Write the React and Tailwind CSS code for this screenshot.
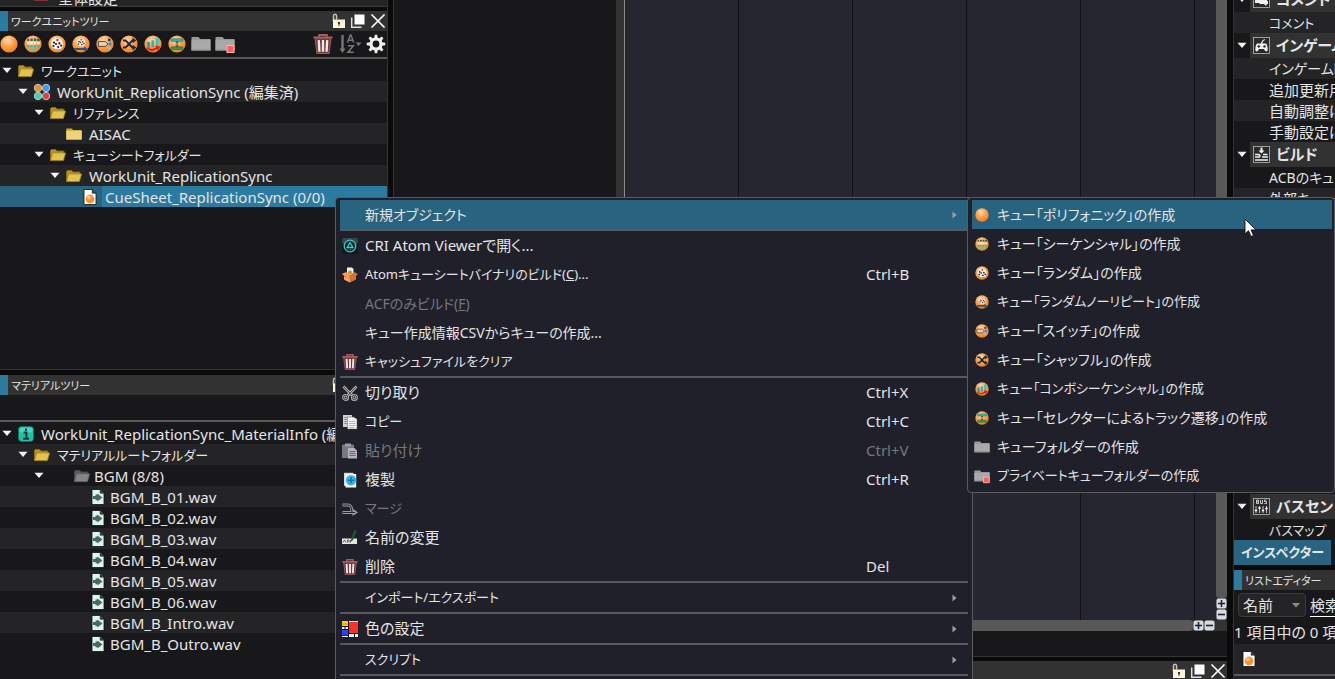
import React, { useId } from 'react';
import clsx from 'clsx';

/* ---------- icons ---------- */

const Orb = ({ size = 18, children }) => {
  const id = useId();
  return (
    <svg width={size} height={size} viewBox="0 0 18 18" className="shrink-0">
      <defs>
        <radialGradient id={id} cx="0.42" cy="0.3" r="0.75">
          <stop offset="0" stopColor="#ffdcb4" />
          <stop offset="0.45" stopColor="#ffa552" />
          <stop offset="1" stopColor="#f27a10" />
        </radialGradient>
      </defs>
      <circle cx="9" cy="9" r="8.6" fill={`url(#${id})`} />
      {children}
    </svg>
  );
};

const Polyphonic = ({ size }) => <Orb size={size} />;

const Sequential = ({ size }) => (
  <Orb size={size}>
    {[3, 6.4, 9.8, 13.2].map((x, i) => (
      <g key={x}>
        <rect x={x} y="3.6" width="2.4" height="2.4" fill={i === 0 ? '#8b5a2b' : '#2e5d5a'} />
        <rect x={x} y="7" width="2.4" height="2.4" fill="#f3f0d8" />
        <rect x={x} y="10.2" width="2.4" height="2.2" fill="#37b9a8" />
        {i > 0 && i < 3 && <rect x={x} y="13.2" width="2.4" height="2.2" fill="#37d6c8" />}
      </g>
    ))}
  </Orb>
);

const Dice = () => (
  <>
    <path d="M5 4.2 9.5 2.8l4.3 2L15.3 10l-2 3.8-5.6.6-4-2.4-.6-4z" fill="#f6f3f0" />
    <circle cx="9.4" cy="5" r="1.2" fill="#d33" />
    <g fill="#222">
      <circle cx="6" cy="7.6" r="1.1" />
      <circle cx="8" cy="9" r="1.1" />
      <circle cx="5.4" cy="11" r="1.1" />
      <circle cx="11.4" cy="8.4" r="1.1" />
      <circle cx="13.2" cy="10.6" r="1.1" />
      <circle cx="10.2" cy="12" r="1.1" />
    </g>
  </>
);

const RandomCue = ({ size }) => (
  <Orb size={size}>
    <Dice />
  </Orb>
);

const RandomNoRepeat = ({ size }) => (
  <Orb size={size}>
    <g transform="translate(2.7 1.2) scale(.7)">
      <Dice />
    </g>
    <path d="M2 13h10v-1.6l4 2.6-4 2.4V15H3.4z" fill="#28557f" />
  </Orb>
);

const SwitchCue = ({ size }) => (
  <Orb size={size}>
    <path d="M2.4 6.6h7l2.6 2.4-2.6 2.4h-7z" fill="#e9d2b0" stroke="#5f4a35" />
    <rect x="12" y="3.6" width="2.6" height="2.6" fill="#33414f" />
    <rect x="12.6" y="7.6" width="2.8" height="2.8" fill="#2a8df0" />
    <rect x="12" y="11.8" width="2.6" height="2.6" fill="#8ec1ea" />
  </Orb>
);

const Shuffle = ({ size }) => (
  <Orb size={size}>
    <path d="M3 5.400h2.600l6.800 7.200h1.600M3 12.600h2.600l6.800-7.200h1.600" fill="none" stroke="#15294a" strokeWidth="2" />
    <path d="M12.600 2.600 16.200 5.400l-3.600 2.800zM12.600 9.800l3.600 2.800-3.600 2.800z" fill="#15294a" />
  </Orb>
);

const ComboSequential = ({ size }) => (
  <Orb size={size}>
    <rect x="3.2" y="7" width="2.6" height="6" fill="#1d9aa6" />
    <rect x="7.4" y="5.4" width="2.6" height="7" fill="#22b4bd" />
    <rect x="11.8" y="3" width="2.8" height="8" fill="#2fc6c9" />
    <path d="M2.6 12.8 8 14l4-1.6-.6-1.8 5 1.2-2.8 4-.6-1.6L8 16.2l-4.8-1.6z" fill="#e01e10" />
  </Orb>
);

const TrackTransition = ({ size }) => (
  <Orb size={size}>
    <rect x="3" y="3.8" width="12" height="2.6" rx="1" fill="#2cbcb2" stroke="#17746e" strokeWidth=".6" />
    <rect x="3" y="11.8" width="12" height="2.8" rx="1" fill="#2f9a48" stroke="#176b2c" strokeWidth=".6" />
    <path d="M9 6.6v5M7.6 7.8 9 6.6l1.400 1.200M7.600 10.600 9 11.800l1.400-1.200" fill="none" stroke="#1e3f66" strokeWidth=".9" />
  </Orb>
);

const GreyFolder = ({ size = 20, badge }) => (
  <svg width={size} height={size} viewBox="0 0 20 20" className="shrink-0">
    <path d="M.5 3h7l1.6 2h10.4v11.5H.5z" fill="#9b9b9b" />
    <path d="M.5 6.2h19V16.5H.5z" fill="#a9a9a9" />
    <path d="M.5 16.1h19" stroke="#7c7c7c" strokeWidth=".8" />
    {badge && <rect x="12" y="11.5" width="7" height="7" fill="#ff5c5c" stroke="#ffb3ac" />}
  </svg>
);
const PrivateFolder = ({ size }) => <GreyFolder size={size} badge />;

const OpenFolder = ({ dim }) => (
  <svg width="16" height="16" viewBox="0 0 16 16">
    <path d="M.5 13.5v-10l.8-1h4.4l1.2 1.6h7v2" fill={dim ? '#5c5c5c' : '#b3922a'} stroke={dim ? '#4a4a4a' : '#8a6d12'} />
    <path d="M2.8 6h12.8l-2.2 7.6H.6z" fill={dim ? '#858585' : '#e2c34c'} stroke={dim ? '#6b6b6b' : '#a8861f'} strokeWidth=".7" />
  </svg>
);

const ClosedFolder = () => (
  <svg width="16" height="16" viewBox="0 0 16 16">
    <path d="M.3 2.4h5.4l1.4 1.5h8.6v9.8H.3z" fill="#c9a63c" />
    <path d="M.3 4.8h15.4v8.6H.3z" fill="#eed476" />
  </svg>
);

const WorkUnitIcon = () => (
  <svg width="18" height="18" viewBox="0 0 18 18" className="shrink-0">
    <g stroke="#b9c6d8" strokeWidth="1">
      <circle cx="5" cy="5" r="3.7" fill="#f58a1f" />
      <circle cx="13" cy="5" r="3.7" fill="#3d9fe8" />
      <circle cx="5" cy="13" r="3.7" fill="#3fd6a0" />
      <circle cx="13" cy="13" r="3.7" fill="#e63a48" />
    </g>
  </svg>
);

const PageBase = ({ fill = '#fff', children }) => (
  <svg width="14" height="16" viewBox="0 0 14 16">
    <path d="M1 .5h8.4L13 4v11.5H1z" fill={fill} stroke="#101010" strokeWidth=".8" />
    <path d="M9.2.6V4.2h3.6" fill="#2b4a44" stroke="#101010" strokeWidth=".6" />
    {children}
  </svg>
);

const CueSheetIcon = () => (
  <PageBase>
    <circle cx="7" cy="10" r="4.4" fill="#ff8e2b" />
    <circle cx="6" cy="8.6" r="2" fill="#ffc48a" />
  </PageBase>
);

const WaveIcon = () => (
  <PageBase fill="#d9f7ee">
    <path d="M2 7h2.500V5.600h2V4.400l4.900 4.100-4.900 4.100v-1.400h-2V10H2z" fill="#4c6660" />
  </PageBase>
);

const InfoIcon = () => (
  <svg width="16" height="16" viewBox="0 0 16 16">
    <rect x=".5" y=".5" width="15" height="15" rx="3" fill="#26bfa6" stroke="#126c5f" />
    <rect x="1.5" y="1.5" width="13" height="5" rx="2" fill="#45d8c0" />
    <path d="M8 2.6v2.2M5.6 6.6H8.4v6M5.2 12.8h5.8" fill="none" stroke="#17343a" strokeWidth="2" />
  </svg>
);

const Trash = ({ size = 16 }) => (
  <svg width={size} height={size} viewBox="0 0 18 18" className="shrink-0">
    <path d="M1.800 3.500h14.400L14.400 17.400H3.600z" fill="#6e3a3b" stroke="#9c5a5a" />
    <path d="M5.200 5.500l.6 10.500M9 5.500v10.500M12.800 5.500l-.6 10.500" stroke="#efe9e9" strokeWidth="2.100" />
    <path d="M.3 3h17.400M5.500 2.600V.900h7v1.700" fill="none" stroke="#a85c5c" strokeWidth="1.600" />
  </svg>
);

const SortIcon = () => (
  <svg width="23" height="20" viewBox="0 0 23 20" fill="none" stroke="#777" strokeWidth="1.5">
    <path d="M3.5 1v16" strokeWidth="2.4" />
    <path d="M.5 14.5h6L3.5 19z" fill="#777" stroke="none" />
    <path d="M8.5 8.5 11.3 1h.6l2.8 7.5M9.4 6.2h4.5M9 11.8h5.4L9 18.2h5.8" />
    <path d="M16.5 8.5h6l-3 3.4z" fill="#777" stroke="none" />
  </svg>
);

const Gear = () => (
  <svg width="20" height="20" viewBox="-10 -10 20 20">
    <circle r="5" fill="none" stroke="#efefef" strokeWidth="3.2" />
    {[0, 45, 90, 135, 180, 225, 270, 315].map((a) => (
      <path key={a} d="M-1.8-5.6-1.2-9.3h2.4l.6 3.7z" fill="#efefef" transform={`rotate(${a})`} />
    ))}
  </svg>
);

const LockIcon = () => (
  <svg width="14" height="16" viewBox="0 0 14 16">
    <path d="M1.5 8V3Q1.500 1.200 3 1.200 4.600 1.200 4.600 3v3.500" fill="none" stroke="#c9c4ae" strokeWidth="1.5" />
    <rect x="1" y="6.500" width="12" height="8.500" fill="#fdf6dc" />
    <path d="M6 9h2v2h-.500v2h-1v-2H6z" fill="#333" />
  </svg>
);

const FloatIcon = () => (
  <svg width="16" height="16" viewBox="0 0 16 16">
    <path d="M1.700 4.500v9.800h9.800" fill="none" stroke="#ddd" strokeWidth="1.500" />
    <rect x="4.500" y="1.500" width="10" height="10" fill="#fff" />
  </svg>
);

const CloseIcon = () => (
  <svg width="16" height="16" viewBox="0 0 16 16">
    <path d="m1.500 1.500 13 13m0-13-13 13" stroke="#fff" strokeWidth="1.700" />
  </svg>
);

const AtomViewer = () => (
  <svg width="16" height="16" viewBox="0 0 16 16">
    <rect width="16" height="16" rx="2" fill="#0c1a20" />
    <rect width="16" height="6" rx="2" fill="#34474f" />
    <circle cx="8" cy="8" r="5.800" fill="#0b2a30" stroke="#41c6c0" strokeWidth="1.300" />
    <path d="m8 4.600 2.800 4.800H5.200z" fill="none" stroke="#3ad0c8" strokeWidth="1.200" />
    <path d="M5 11h6" stroke="#1c7f80" />
  </svg>
);

const BuildBox = () => (
  <svg width="16" height="16" viewBox="0 0 16 16">
    <path d="M5 .500h5l1.500 1.500v6H5z" fill="#f3ede4" />
    <circle cx="8" cy="5.500" r="2" fill="#c98a3e" />
    <path d="M0 7 4 5l4 3.500L12 5l4 2-2 2v3.500L8 15.500l-6-3V9z" fill="#d9702c" />
    <path d="M2 9.500 8 11v4.500l-6-3zM0 7l4-1.500 4 4-1.500 1.500z" fill="#f3a15c" />
  </svg>
);

const Scissors = () => (
  <svg width="16" height="16" viewBox="0 0 16 16" fill="none">
    <g stroke="#b5b5b5" strokeWidth="2.600">
      <path d="m1.500 1.500 8.700 9M14.500 1.500l-8.700 9" />
      <circle cx="3.600" cy="12.400" r="2.200" />
      <circle cx="12.400" cy="12.400" r="2.200" />
    </g>
    <g stroke="#25252e" strokeWidth=".8">
      <path d="m2 2 8 8.300M14 2l-8 8.300" />
      <circle cx="3.600" cy="12.400" r="2.200" />
      <circle cx="12.400" cy="12.400" r="2.200" />
    </g>
  </svg>
);

const CopyIcon = () => (
  <svg width="16" height="16" viewBox="0 0 16 16">
    <path d="M1 1h9v12H1z" fill="#d2d2d2" />
    <path d="M2.500 3.500h2M2.500 5.500h2M2.500 7.500h2M2.500 9.500h2" stroke="#777" />
    <path d="M5.500 3h6l3.500 2v10H5.500z" fill="#f4f4f4" stroke="#55555c" strokeWidth=".5" />
    <path d="M7 7.500h6.500M7 9.500h6.500M7 11.500h6.500M7 13.500h5" stroke="#a6a6a6" strokeWidth=".8" />
  </svg>
);

const PasteIcon = () => (
  <svg width="16" height="16" viewBox="0 0 16 16">
    <rect x="0" y="1.500" width="12" height="13.500" rx="1" fill="#787880" />
    <rect x="3" y=".5" width="6" height="3" fill="#9a9aa0" />
    <path d="M6 5h6.500L15 7.500v8H6z" fill="#b4b4be" />
    <path d="M7.500 8.500h6M7.500 10.500h6M7.500 12.500h6" stroke="#666670" />
  </svg>
);

const DuplicateIcon = () => (
  <svg width="16" height="16" viewBox="0 0 16 16">
    <path d="M2 .8h9.500v13H2z" fill="#d9d9d9" />
    <path d="M3.500 2h10.700v13.500H3.500z" fill="#fff" />
    <circle cx="9" cy="8.300" r="5.200" fill="#2db4f5" />
    <path d="M9 5.300v6M6 8.300h6" stroke="#0b4f80" strokeWidth="1.100" />
  </svg>
);

const MergeIcon = () => (
  <svg width="16" height="16" viewBox="0 0 16 16" fill="none">
    <path d="M.5 4h5.500Q9.500 4 10 10M.5 11.500h11" stroke="#9a9aa2" strokeWidth="3" />
    <path d="m10.500 7.500 5.500 4-5.500 3.500z" fill="#9a9aa2" />
    <path d="M1 4h5Q9.500 4 10 11M1 11.500h12" stroke="#24242c" strokeWidth="1.100" />
  </svg>
);

const RenameIcon = () => (
  <svg width="16" height="16" viewBox="0 0 16 16">
    <rect x="0" y="8.500" width="15" height="5.500" fill="#e6e6d8" />
    <path d="M1 12.500 2.500 10 4 12.500M5.500 12.500V10H7v2.500M8.500 12.500V10" stroke="#555" strokeWidth=".9" fill="none" />
    <path d="M12 .5h2.800L11 10l-2.600 2z" fill="#14602b" />
  </svg>
);

const ColorIcon = () => (
  <svg width="16" height="16" viewBox="0 0 16 16">
    <rect width="16" height="16" fill="#111" />
    <path d="M0 0h6v5H0z" fill="#ffd500" />
    <path d="M0 3h6" stroke="#a88c00" strokeWidth=".8" />
    <path d="M7 1h9v11H7z" fill="#ff3126" />
    <path d="M0 6h2.500v2H0zM3.500 6H6v2H3.500zM0 15h6v1H0zM7 13h5v3H7zM13 13h3v3h-3zM7 0h9v1H7z" fill="#f4f4f4" />
    <path d="M0 9h6v5.500H0z" fill="#2b42ff" />
  </svg>
);

const BoxedIcon = ({ children }) => (
  <svg width="17" height="17" viewBox="0 0 17 17" className="shrink-0">
    <rect x=".5" y=".5" width="16" height="16" fill="#2a2a2a" stroke="#b9b9b9" strokeWidth=".8" />
    {children}
  </svg>
);

const CommentGlyph = () => (
  <BoxedIcon>
    <path d="M2 3h12v7h1v3h-1l-1 2-2-2H7l-1-1H2z" fill="#f0f0f0" />
  </BoxedIcon>
);
const GameGlyph = () => (
  <BoxedIcon>
    <path d="M4.500 6.500h8q1.800 0 2.200 5.500.2 2.500-1.500 2.500-1 0-2.200-2.500H6Q4.800 14.500 3.800 14.500 2 14.500 2.300 12 2.700 6.500 4.500 6.500zM8 6.500Q8 4 11.500 2l.5.700Q9.300 4.500 9.200 6.500z" fill="#f2f2f2" />
    <path d="M4.300 9.400h3M5.800 7.900v3" stroke="#222" />
    <circle cx="11.500" cy="9.400" r="1.200" fill="#222" />
  </BoxedIcon>
);
const BuildGlyph = () => (
  <BoxedIcon>
    <path d="M7.500 1.500h2v3h2l-3 3-3-3h2z" fill="#f2f2f2" />
    <path d="M2 8.500h4l1.500 2M10 8.500h4.500M2 11h5M9 11h6M2 14h13" stroke="#f2f2f2" strokeWidth="1.400" fill="none" />
  </BoxedIcon>
);
const BusGlyph = () => (
  <BoxedIcon>
    <path d="M3 8v7M6.500 8v7M10 8v7M13.500 8v7" stroke="#eee" fill="none" strokeWidth=".8" />
    <path d="M3.500 2v3.500h2V2zM3.500 3.700h2M7.500 2v3.500h2V2M13.500 2h-2v1.700h2v1.800h-2" stroke="#eee" fill="none" strokeWidth=".8" />
    <path d="M1.800 12.500h2.400M5.300 10h2.400M8.800 12.500h2.400M12.300 10.500h2.400" stroke="#fff" strokeWidth="1.600" />
  </BoxedIcon>
);

const Caret = () => (
  <svg width="10" height="7" viewBox="0 0 10 7">
    <path d="M.5.700h9L5 6z" fill="#f4f4f4" />
  </svg>
);

/* ---------- data ---------- */

const workTree = [
  { label: 'ワークユニット', depth: 0, icon: OpenFolder, open: true },
  { label: 'WorkUnit_ReplicationSync (編集済)', depth: 1, icon: WorkUnitIcon, open: true },
  { label: 'リファレンス', depth: 2, icon: OpenFolder, open: true },
  { label: 'AISAC', depth: 3, icon: ClosedFolder },
  { label: 'キューシートフォルダー', depth: 2, icon: OpenFolder, open: true },
  { label: 'WorkUnit_ReplicationSync', depth: 3, icon: OpenFolder, open: true },
  { label: 'CueSheet_ReplicationSync (0/0)', depth: 4, icon: CueSheetIcon, selected: true },
];

const DimFolder = () => <OpenFolder dim />;

const materialTree = [
  { label: 'WorkUnit_ReplicationSync_MaterialInfo (編集済)', depth: 0, icon: InfoIcon, open: true },
  { label: 'マテリアルルートフォルダー', depth: 1, icon: OpenFolder, open: true },
  { label: 'BGM (8/8)', depth: 2, icon: DimFolder, open: true, gutter: true },
  ...['01', '02', '03', '04', '05', '06', 'Intro', 'Outro'].map((n) => ({
    label: `BGM_B_${n}.wav`,
    depth: 3,
    icon: WaveIcon,
    gutter: true,
  })),
];

const cueTools = [
  ['ポリフォニック', Polyphonic],
  ['シーケンシャル', Sequential],
  ['ランダム', RandomCue],
  ['ランダムノーリピート', RandomNoRepeat],
  ['スイッチ', SwitchCue],
  ['シャッフル', Shuffle],
  ['コンボシーケンシャル', ComboSequential],
  ['セレクターによるトラック遷移', TrackTransition],
];

const menuGroups = [
  [{ label: '新規オブジェクト', sub: true, active: true }],
  [
    { label: 'CRI Atom Viewerで開く...', icon: AtomViewer },
    { label: 'Atomキューシートバイナリのビルド', mnemonic: 'C', tail: '...', icon: BuildBox, keys: 'Ctrl+B' },
    { label: 'ACFのみビルド', mnemonic: 'F', disabled: true },
    { label: 'キュー作成情報CSVからキューの作成...' },
    { label: 'キャッシュファイルをクリア', icon: Trash },
  ],
  [
    { label: '切り取り', icon: Scissors, keys: 'Ctrl+X' },
    { label: 'コピー', icon: CopyIcon, keys: 'Ctrl+C' },
    { label: '貼り付け', icon: PasteIcon, keys: 'Ctrl+V', disabled: true },
    { label: '複製', icon: DuplicateIcon, keys: 'Ctrl+R' },
    { label: 'マージ', icon: MergeIcon, disabled: true },
    { label: '名前の変更', icon: RenameIcon },
    { label: '削除', icon: Trash, keys: 'Del' },
  ],
  [{ label: 'インポート/エクスポート', sub: true }],
  [{ label: '色の設定', icon: ColorIcon, sub: true }],
  [{ label: 'スクリプト', sub: true }],
];

const labelSize = (label) => {
  const kana = (label.match(/[ァ-ヶー]/g) || []).length;
  if (kana === 0) return 'text-[15px]';
  return kana > 12 || kana / label.length > 0.9 ? 'text-[13px]' : 'text-[14px]';
};

/* ---------- pieces ---------- */

const WindowButtons = () => (
  <div className="flex items-center gap-1 pr-px">
    <button type="button" aria-label="ロック"><LockIcon /></button>
    <button type="button" aria-label="フロート"><FloatIcon /></button>
    <button type="button" aria-label="閉じる"><CloseIcon /></button>
  </div>
);

const PanelHeader = ({ title, children }) => (
  <div className="flex h-5 shrink-0 items-center bg-[#323232]">
    <span className="h-full w-2 shrink-0 bg-[#2b7a9f]" />
    <h2 className="flex-1 whitespace-nowrap pl-[3px] pt-0.5 text-[11px]">{title}</h2>
    {children}
  </div>
);

const Tree = ({ rows }) => (
  <ul role="tree" className="pt-px">
    {rows.map(({ label, depth, icon: Icon, open, selected, gutter }, i) => (
      <li
        key={label}
        role="treeitem"
        className={clsx(
          'flex h-[21px] items-center whitespace-nowrap',
          selected ? 'bg-[#28637f]' : i % 2 ? 'bg-[#242426]' : 'bg-[#18181a]'
        )}
      >
        <span style={{ width: depth * 16 }} className="shrink-0" />
        <span className="flex w-[18px] shrink-0 pl-0.5">{open && <Caret />}</span>
        {gutter && <span className="w-6 shrink-0" />}
        <span className="flex w-4 shrink-0 justify-center"><Icon /></span>
        <span
          className={clsx(
            'flex h-full min-w-0 flex-1 items-center pt-0.5',
            labelSize(label),
            gutter ? 'pl-1' : selected ? 'ml-1 bg-[#2b7a9f] pl-[3px]' : 'pl-[7px]'
          )}
        >
          {label}
        </span>
      </li>
    ))}
  </ul>
);

const MenuItem = ({ label, mnemonic, tail, icon: Icon, keys, sub, active, disabled }) => (
  <button
    type="button"
    role="menuitem"
    disabled={disabled}
    className={clsx(
      'flex h-[29px] w-full items-center whitespace-nowrap pl-0.5 text-left',
      active && 'bg-[#28637f]',
      disabled && 'text-[#77777a]'
    )}
  >
    <span className="flex w-[23px] shrink-0">{Icon && <Icon />}</span>
    <span className={clsx('flex-1', labelSize(label))}>
      {label}
      {mnemonic && <>(<u>{mnemonic}</u>)</>}
      {tail}
    </span>
    <span className="w-[86px] text-[15px]">{keys}</span>
    <span className="w-4">
      {sub && (
        <svg width="5" height="8" viewBox="0 0 5 8">
          <path d="M.500.500 4.500 4 .500 7.500z" fill="#a0a0a0" />
        </svg>
      )}
    </span>
  </button>
);

const ContextMenu = () => (
  <div role="menu" className="absolute left-[335px] top-[197px] w-[638px] rounded-t border border-[#5a5a5f] bg-[#20202a] px-1 pb-2 pt-0.5">
    {menuGroups.map((group, i) => (
      <div key={i} className="border-b-2 border-[#5a5a5a]">
        {group.map((item) => <MenuItem key={item.label} {...item} />)}
      </div>
    ))}
  </div>
);

const SubMenuItem = ({ label, icon: Icon, size, active }) => (
  <button
    type="button"
    role="menuitem"
    className={clsx(
      'flex h-[29px] w-full items-center whitespace-nowrap pl-0.5 text-left',
      labelSize(label),
      active && 'bg-[#28637f]'
    )}
  >
    <span className="flex w-[23px] shrink-0"><span className="flex w-4 justify-center"><Icon size={size} /></span></span>
    {label}
  </button>
);

const SubMenu = () => (
  <div role="menu" className="absolute left-[967px] right-0 top-[197px] rounded border border-[#5a5a5f] bg-[#20202a] pb-0.5 pl-1 pr-0.5 pt-0.5">
    {cueTools.map(([name, icon], i) => (
      <SubMenuItem key={name} label={`キュー「${name}」の作成`} icon={icon} size={14} active={i === 0} />
    ))}
    <SubMenuItem label="キューフォルダーの作成" icon={GreyFolder} size={16} />
    <SubMenuItem label="プライベートキューフォルダーの作成" icon={PrivateFolder} size={16} />
  </div>
);

const PropGroup = ({ title, icon: Icon, items, startDark }) => (
  <section>
    <h3 className="flex h-[25px] items-center whitespace-nowrap text-[15px] font-bold">
      <span className="flex w-4 shrink-0 justify-center"><Caret /></span>
      <span className="flex h-full flex-1 items-center gap-1.5 bg-[#323232] pl-[3px]"><Icon />{title}</span>
    </h3>
    {items.map((item, i) => (
      <p
        key={item}
        className={clsx(
          'h-[21px] whitespace-nowrap pl-[35px] pt-px leading-5',
          labelSize(item),
          (i % 2 === 0) === !startDark ? 'bg-[#242426]' : 'bg-[#18181a]'
        )}
      >
        {item}
      </p>
    ))}
  </section>
);

const ZoomButton = ({ plus }) => (
  <button type="button" aria-label={plus ? '拡大' : '縮小'} className="flex">
    <svg width="11" height="11" viewBox="0 0 11 11">
      <rect x=".5" y=".5" width="10" height="10" rx="2" fill="#d9dade" />
      <path d={plus ? 'M5.500 2v7M2 5.500h7' : 'M2 5.500h7'} stroke="#12233f" strokeWidth="1.600" />
    </svg>
  </button>
);

/* ---------- columns ---------- */

const LeftColumn = () => (
  <aside className="flex w-[388px] shrink-0 flex-col border-r border-[#333]">
    <div className="flex h-[7px] shrink-0 items-end overflow-hidden border-b border-[#3a3a3a] bg-[#242426] pl-[34px] text-[15px] leading-4">
      <span className="mr-2.5 h-px w-3.5 self-start bg-[#8c3038]" />
      <span>全体設定</span>
    </div>
    <div className="h-1 shrink-0 bg-[#0a0a0a]" />
    <section className="flex h-[359px] shrink-0 flex-col border-b border-[#333]">
      <PanelHeader title="ワークユニットツリー"><WindowButtons /></PanelHeader>
      <div className="flex h-7 shrink-0 items-center justify-between border-b-2 border-[#5a5a5a] pr-px">
        <div className="flex">
          {cueTools.map(([name, Icon]) => (
            <button key={name} type="button" aria-label={name} className="w-6"><Icon size={18} /></button>
          ))}
          <button type="button" aria-label="フォルダー" className="-ml-px w-6"><GreyFolder /></button>
          <button type="button" aria-label="プライベートフォルダー" className="w-6"><PrivateFolder /></button>
        </div>
        <div className="flex items-center gap-1">
          <button type="button" aria-label="削除" className="mr-0.5"><Trash size={20} /></button>
          <button type="button" aria-label="並べ替え"><SortIcon /></button>
          <button type="button" aria-label="設定"><Gear /></button>
        </div>
      </div>
      <Tree rows={workTree} />
    </section>
    <div className="h-[5px] shrink-0 bg-[#0a0a0a]" />
    <section className="flex flex-1 flex-col">
      <PanelHeader title="マテリアルツリー"><WindowButtons /></PanelHeader>
      <div className="h-[27px] shrink-0 border-b-2 border-[#5a5a5a]" />
      <Tree rows={materialTree} />
    </section>
  </aside>
);

const Timeline = () => (
  <main className="ml-[5px] flex min-w-0 flex-1 flex-col border-l border-[#333]">
    <div className="flex min-h-0 flex-1">
      <div className="w-[222px] shrink-0" />
      <div className="w-2 shrink-0 bg-[#333]" />
      <div className="flex flex-1 overflow-hidden border-l border-[#8a8a8a] bg-[#262631]">
        {[0, 1, 2, 3, 4].map((n) => <div key={n} className="w-[114px] shrink-0 border-r border-[#111116]" />)}
      </div>
      <div className="flex w-[11px] shrink-0 flex-col bg-[#333]">
        <div className="flex-1 rounded-b bg-[#585858]" />
        <ZoomButton plus />
        <ZoomButton />
      </div>
    </div>
    <div className="flex h-[11px] shrink-0 bg-[#333] pr-3">
      <div className="flex-1 rounded-r bg-[#585858]" />
      <ZoomButton plus />
      <ZoomButton />
    </div>
    <div className="h-[26px] shrink-0 border-b border-[#333]" />
    <div className="h-1 shrink-0 bg-[#0a0a0a]" />
    <div className="-mb-0.5 flex h-5 shrink-0 items-center justify-end bg-[#323232]"><WindowButtons /></div>
  </main>
);

const RightColumn = () => (
  <aside className="ml-[6px] flex w-[102px] shrink-0 flex-col overflow-hidden border-l border-[#333]">
    <div className="-mt-[13px] flex min-h-0 flex-1 flex-col overflow-hidden">
      <PropGroup title="コメント" icon={CommentGlyph} items={['コメント']} />
      <PropGroup title="インゲームプレビュー" icon={GameGlyph} items={['インゲーム時に', '追加更新用', '自動調整に', '手動設定に']} />
      <PropGroup title="ビルド" icon={BuildGlyph} items={['ACBのキュー', '外部キュー']} startDark />
    </div>
    <div className="shrink-0">
      <PropGroup title="バスセンド" icon={BusGlyph} items={['バスマップ']} startDark />
      <button type="button" className="block h-[25px] w-[97px] whitespace-nowrap bg-[#28637f] text-[13px] font-bold">インスペクター</button>
      <div className="h-[5px] bg-[#0a0a0a]" />
      <PanelHeader title="リストエディター" />
      <div className="flex h-[30px] w-48 items-center gap-1 pl-1">
        <div className="relative">
          <select aria-label="検索対象" className="h-6 w-[68px] appearance-none rounded-sm border border-[#3c3c3c] bg-[#242426] px-1 text-[15px] leading-5">
            <option>名前</option>
          </select>
          <svg width="8" height="5" viewBox="0 0 8 5" className="absolute right-1.5 top-2.5">
            <path d="M0 0h8L4 4.500z" fill="#8c8c8c" />
          </svg>
        </div>
        <input aria-label="検索" placeholder="検索" className="h-6 w-28 border-b border-white bg-[#18181a] text-[15px] placeholder-[#e4e4e4]" />
      </div>
      <p className="h-6 whitespace-nowrap text-[15px] leading-6">1 項目中の 0 項目</p>
      <div className="flex h-8 items-center border-b-2 border-[#5a5a5a] bg-[#242426] pl-2"><CueSheetIcon /></div>
      <div className="h-[3px] bg-[#242426]" />
    </div>
  </aside>
);

export default function App() {
  return (
    <div className="relative flex h-screen overflow-hidden bg-[#0a0a0a] font-['Noto_Sans','Noto_Sans_CJK_JP',sans-serif] text-[#e4e4e4] [font-feature-settings:'palt']">
      <div className="flex min-w-0 flex-1 [&>*]:bg-[#18181a]">
        <LeftColumn />
        <Timeline />
        <RightColumn />
      </div>
      <ContextMenu />
      <SubMenu />
      <svg width="13" height="20" viewBox="0 0 13 20" className="absolute left-[1244px] top-[218px]">
        <path d="M1 1v15l3.500-3.300L7 18.500l2.500-1-2.400-5.600H12z" fill="#fff" stroke="#111" strokeWidth=".9" />
      </svg>
    </div>
  );
}
